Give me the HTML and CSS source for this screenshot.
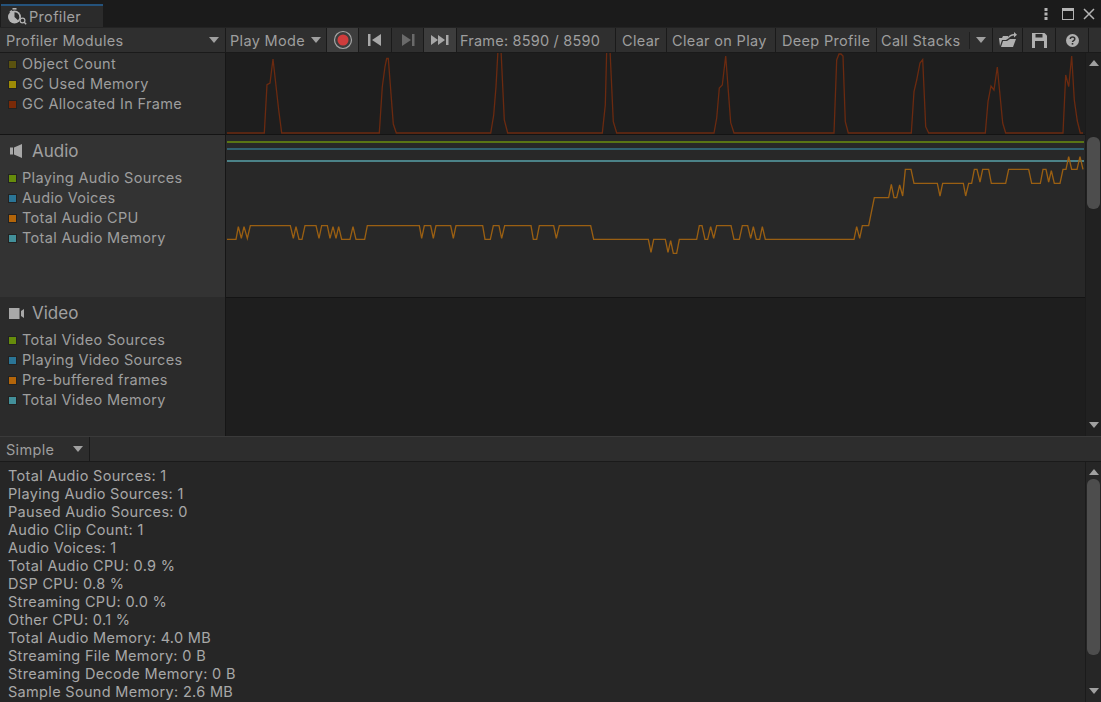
FILE: index.html
```html
<!DOCTYPE html>
<html lang="en">
<head>
    <meta charset="UTF-8">
    <title>Profiler</title>
    <link rel="stylesheet" href="styles.css">
</head>
<body>
    <div class="tabbar">
        <div class="tab">
            <svg class="tab-icon" width="19" height="17" viewBox="0 0 19 17">
                <rect x="4.500" y="0" width="4" height="1.600" fill="#b4b4b4"/>
                <path d="M1.500 3.500l2-1.500 1 1.200-2 1.500z" fill="#b4b4b4"/>
                <circle cx="6.500" cy="9" r="6.500" fill="#b4b4b4"/>
                <path d="M6.500 9V4.200A4.800 4.800 0 0 1 10 12.300z" fill="#2b2b2b"/>
                <circle cx="14.500" cy="12.500" r="2.400" fill="#2b2b2b" stroke="#b4b4b4" stroke-width="1.200"/>
                <path d="M16.200 14.300l2 2" stroke="#b4b4b4" stroke-width="1.400"/>
            </svg>
            <span>Profiler</span>
        </div>
        <div class="window-controls">
            <svg width="4" height="12" viewBox="0 0 4 12" fill="#b4b4b4"><rect x="0.500" y="0" width="3" height="3"/><rect x="0.500" y="4.500" width="3" height="3"/><rect x="0.500" y="9" width="3" height="3"/></svg>
            <svg class="win-max" width="12" height="12" viewBox="0 0 12 12"><rect x="0.500" y="0.500" width="11" height="11" fill="none" stroke="#b4b4b4"/><rect x="0" y="0" width="12" height="3" fill="#b4b4b4"/></svg>
            <svg width="12" height="12" viewBox="0 0 12 12"><path d="M1 1l10 10M11 1L1 11" stroke="#b4b4b4" stroke-width="1.500"/></svg>
        </div>
    </div>

    <div class="toolbar">
        <div class="btn modules-btn">Profiler Modules<i class="caret"></i></div>
        <div class="btn mode-btn">Play Mode<i class="caret"></i></div>
        <div class="btn icon-btn rec-btn active">
            <svg width="20" height="20" viewBox="0 0 20 20"><circle cx="10" cy="10" r="8.500" fill="none" stroke="#a5a5a5" stroke-width="1.200"/><circle cx="10" cy="10" r="5.500" fill="#d03c3c"/></svg>
        </div>
        <div class="btn icon-btn">
            <svg width="14" height="12" viewBox="0 0 14 12" fill="#a8a8a8"><rect x="0" y="0" width="2.500" height="12"/><path d="M13 0v12L4 6z"/></svg>
        </div>
        <div class="btn icon-btn next-btn">
            <svg width="14" height="12" viewBox="0 0 14 12" fill="#6a6a6a"><path d="M1 0v12l9-6z"/><rect x="11" y="0" width="2.500" height="12"/></svg>
        </div>
        <div class="btn icon-btn active">
            <svg width="18" height="10" viewBox="0 0 18 10" fill="#a8a8a8"><path d="M0 0v10l7-5z"/><path d="M7 0v10l7-5z"/><rect x="15" y="0" width="2.500" height="10"/></svg>
        </div>
        <div class="btn frame-label">Frame: 8590 / 8590</div>
        <div class="btn clear-btn">Clear</div>
        <div class="btn clear-play-btn">Clear on Play</div>
        <div class="btn deep-btn">Deep Profile</div>
        <div class="btn stacks-btn"><span class="stacks-label">Call Stacks</span><i class="caret"></i></div>
        <div class="btn icon-btn open-btn">
            <svg width="18" height="16" viewBox="0 0 18 16" fill="#b0b0b0"><path d="M0 6h3l1-2h5l1 2H10L7 8H3l-2 6z" /><path d="M2 15l2-6h4l3-2h6l-3 8z"/><path d="M9 6c1-3 3-4 6-4V0l3 2.800L15 5.500V3.500c-2 0-4 1-5 2.500z"/></svg>
        </div>
        <div class="btn icon-btn save-btn">
            <svg width="15" height="15" viewBox="0 0 15 15"><path d="M0 0h12.500L15 2.500V15H0z" fill="#b0b0b0"/><rect x="3.500" y="1" width="7" height="3.500" fill="#2f2f2f"/><rect x="3" y="8" width="9" height="7" fill="#2f2f2f"/></svg>
        </div>
        <div class="btn icon-btn help-btn">
            <svg width="13" height="13" viewBox="0 0 13 13"><circle cx="6.500" cy="6.500" r="6.500" fill="#b0b0b0"/><path d="M4.300 5c0-2.600 4.500-2.600 4.500 0 0 1.600-2.300 1.500-2.300 3" fill="none" stroke="#2f2f2f" stroke-width="1.500"/><rect x="5.700" y="9" width="1.600" height="1.600" fill="#2f2f2f"/></svg>
        </div>
        <div class="btn toolbar-fill"></div>
    </div>

    <div class="modules">
        <div class="module-rows">
            <section class="module module-memory">
                <div class="legend">
                    <div class="legend-row"><i class="swatch sw-olive"></i>Object Count</div>
                    <div class="legend-row"><i class="swatch sw-yellow"></i>GC Used Memory</div>
                    <div class="legend-row"><i class="swatch sw-red"></i>GC Allocated In Frame</div>
                </div>
                <div class="chart">
                    <svg viewBox="226 53 859 81">
                        <polyline class="line-gc" points="227,133 264.300,133 267,84.700 270,83 273,59 278.700,110 281.700,133 379.300,133 382.300,86.700 385,66.700 386.700,58.500 388.300,58.500 393.300,124 396.300,133 490.700,133 493.700,115 496,86.700 498,50 501,50 504.300,120 507.700,133 602.300,133 605.300,105 606.700,50 610,50 613.300,121.700 616.700,133 714,133 716.700,118 719.300,88 722.300,85 725.700,56 730.700,122.700 734,133 834,133 836.700,60 839,54 841,54 843,56 845.300,121.700 848.300,133 911.300,133 914,91.700 916.700,80 920,63 922.700,59.500 925.700,126.700 928.700,133 985.300,133 988,101.700 991,86 994,90 997.300,67 1002.700,123 1005.700,133 1063,133 1065.700,75 1068.700,86.700 1071.700,56 1074.300,100 1077.300,121 1080.300,133 1083,133"/>
                    </svg>
                </div>
            </section>

            <section class="module module-audio">
                <div class="legend">
                    <h3 class="module-title">
                        <svg class="icon-speaker" width="12" height="14" viewBox="0 0 12 14" fill="#a8a8a8"><rect x="0" y="3.500" width="3" height="7"/><path d="M4 3.500L12 0v14L4 10.500z"/></svg>
                        Audio
                    </h3>
                    <div class="legend-row"><i class="swatch sw-green"></i>Playing Audio Sources</div>
                    <div class="legend-row"><i class="swatch sw-blue"></i>Audio Voices</div>
                    <div class="legend-row"><i class="swatch sw-orange"></i>Total Audio CPU</div>
                    <div class="legend-row"><i class="swatch sw-teal"></i>Total Audio Memory</div>
                </div>
                <div class="chart">
                    <svg viewBox="226 135 859 162">
                        <line class="line-green" x1="227" y1="142" x2="1084" y2="142"/>
                        <line class="line-blue" x1="227" y1="149" x2="1084" y2="149"/>
                        <line class="line-teal" x1="227" y1="161" x2="1084" y2="161"/>
                        <!-- trace coordinates are in 3x units, three stretches of the line -->
                        <g transform="translate(220 130) scale(.33333)">
                            <polyline class="line-cpu" points="21,328 48,328 55,290 64,325 72,290 82,325 91,287 211,287 220,325 228,290 237,328 246,328 255,287 288,287 297,325 305,287 322,287 330,325 339,290 348,325 356,290 365,328 390,328 399,290 408,328 434,328 442,287 598,287 605,325 613,287 632,287 640,325 648,287 692,287 700,325 708,287 788,287 795,328 811,328 820,287 837,287 845,325 854,287 900,287"/>
                        </g>
                        <g transform="translate(520 130) scale(.33333)">
                            <polyline class="line-cpu" points="0,287 33,287 40,328 50,328 58,287 101,287 109,325 118,287 212,287 221,328 385,328 393,367 401,328 436,328 444,367 452,332 460,370 470,370 478,328 530,328 538,287 546,287 555,328 563,328 572,290 581,325 590,287 633,287 642,328 658,328 667,287 683,287 692,325 700,290 709,328 719,328 727,290 736,328 900,328"/>
                        </g>
                        <g transform="translate(820 130) scale(.33333)">
                            <polyline class="line-cpu" points="0,328 102,328 110,290 119,325 127,287 146,287 163,203 206,203 214,163 222,203 230,203 239,165 248,198 256,118 273,118 282,160 352,160 360,198 368,160 430,160 437,198 446,160 455,160 463,118 471,118 480,156 488,118 506,118 514,160 557,160 566,118 626,118 635,160 661,160 669,118 678,118 686,156 694,122 703,160 720,160 729,118 738,118 746,80 755,118 771,118 780,80 789,118"/>
                        </g>
                    </svg>
                </div>
            </section>

            <section class="module module-video">
                <div class="legend">
                    <h3 class="module-title">
                        <svg class="icon-video" width="15" height="11" viewBox="0 0 15 11" fill="#a8a8a8"><rect x="0" y="0" width="10.500" height="11"/><path d="M12 3L15 1v9l-3-2z"/></svg>
                        Video
                    </h3>
                    <div class="legend-row"><i class="swatch sw-green"></i>Total Video Sources</div>
                    <div class="legend-row"><i class="swatch sw-blue"></i>Playing Video Sources</div>
                    <div class="legend-row"><i class="swatch sw-orange"></i>Pre-buffered frames</div>
                    <div class="legend-row"><i class="swatch sw-teal"></i>Total Video Memory</div>
                </div>
                <div class="chart"></div>
            </section>
        </div>
        <div class="scrollbar">
            <i class="arrow-up"></i>
            <div class="thumb thumb-modules"></div>
            <i class="arrow-down"></i>
        </div>
    </div>

    <div class="details-bar">
        <div class="simple-btn">Simple<i class="caret"></i></div>
    </div>

    <div class="details">
        <div class="details-text">
            <div>Total Audio Sources: 1</div>
            <div>Playing Audio Sources: 1</div>
            <div>Paused Audio Sources: 0</div>
            <div>Audio Clip Count: 1</div>
            <div>Audio Voices: 1</div>
            <div>Total Audio CPU: 0.9 %</div>
            <div>DSP CPU: 0.8 %</div>
            <div>Streaming CPU: 0.0 %</div>
            <div>Other CPU: 0.1 %</div>
            <div>Total Audio Memory: 4.0 MB</div>
            <div>Streaming File Memory: 0 B</div>
            <div>Streaming Decode Memory: 0 B</div>
            <div>Sample Sound Memory: 2.6 MB</div>
        </div>
        <div class="scrollbar details-scroll">
            <i class="arrow-up"></i>
            <div class="thumb thumb-details"></div>
            <i class="arrow-down"></i>
        </div>
    </div>
</body>
</html>
```

FILE: styles.css
```css
html, body {
    height: 100%;
}
body {
    margin: 0;
    display: flex;
    flex-direction: column;
    height: 702px;
    overflow: hidden;
    background: #262626;
    color: #9e9e9e;
    font-family: Inter, "Liberation Sans", sans-serif;
    font-size: 14.5px;
    letter-spacing: .32px;
}

/* tab strip */
.tabbar {
    height: 27px;
    flex: none;
    display: flex;
    justify-content: space-between;
    box-sizing: border-box;
    background: #1b1b1b;
    padding: 4px 6px 0 1px;
}
.tab {
    width: 102px;
    box-sizing: border-box;
    display: flex;
    align-items: center;
    gap: 2px;
    padding: 0 0 0 7px;
    background: #2b2b2b;
    border-top: 2px solid #25537c;
    color: #a0a0a0;
}
.window-controls {
    display: flex;
    align-items: center;
    gap: 9px;
    padding-bottom: 4px;
}
.win-max {
    margin-left: 5px;
}

/* toolbar */
.toolbar {
    height: 26px;
    flex: none;
    box-sizing: border-box;
    display: flex;
    gap: 1px;
    background: #1a1a1a;
    border-top: 1px solid #232323;
    border-bottom: 1px solid #1a1a1a;
}
.btn {
    display: flex;
    align-items: center;
    box-sizing: border-box;
    padding: 0 6px;
    background: #2f2f2f;
    white-space: nowrap;
}
.btn.active {
    background: #3d3d3d;
}
.caret {
    display: block;
    width: 0;
    height: 0;
    border-left: 5px solid transparent;
    border-right: 5px solid transparent;
    border-top: 6px solid #a0a0a0;
}
.modules-btn {
    width: 225px;
    justify-content: space-between;
}
.mode-btn {
    width: 100px;
    padding: 0 5px 0 4px;
    justify-content: space-between;
}
.icon-btn {
    width: 32px;
    padding: 0;
    justify-content: center;
}
.rec-btn, .next-btn {
    width: 31px;
}
.open-btn {
    width: 29px;
}
.frame-label {
    width: 158px;
    padding: 0 3px;
    letter-spacing: .2px;
}
.clear-btn {
    width: 50px;
}
.clear-play-btn {
    width: 108px;
    padding: 0 5px;
}
.deep-btn {
    width: 100px;
}
.stacks-btn {
    width: 115px;
    padding: 0 6px 0 4px;
}
.stacks-label {
    padding-right: 8px;
    margin-right: 6px;
    border-right: 1px solid #1f1f1f;
}
.toolbar-fill {
    flex: 1;
    padding: 0;
}

/* module rows */
.modules {
    height: 383px;
    flex: none;
    display: flex;
}
.module-rows {
    flex: 1;
    display: flex;
    flex-direction: column;
}
.module {
    display: flex;
    box-sizing: border-box;
}
.module-memory {
    height: 82px;
    border-bottom: 1px solid #141414;
}
.module-audio {
    height: 162px;
}
.module-video {
    flex: 1;
}
.legend {
    width: 226px;
    flex: none;
    box-sizing: border-box;
    padding-left: 8px;
    background: #2b2b2b;
    border-right: 1px solid #161616;
}
.module-audio .legend {
    background: #333333;
}
.legend-row {
    height: 20px;
    display: flex;
    align-items: center;
    gap: 5px;
}
.swatch {
    width: 9px;
    height: 9px;
    margin-top: 2px;
    box-sizing: border-box;
    border: 1px solid #222222;
}
.sw-olive { background: #5a5210; }
.sw-yellow { background: #9c8a06; }
.sw-red { background: #7a2a08; }
.sw-green { background: #668c0c; }
.sw-blue { background: #2b7596; }
.sw-orange { background: #b3650a; }
.sw-teal { background: #43909a; }

.module-title {
    margin: 0;
    height: 32px;
    display: flex;
    align-items: center;
    font-size: 17px;
    font-weight: normal;
    letter-spacing: 0;
    color: #a0a0a0;
}
.icon-speaker {
    margin: 0 10px 0 2px;
}
.icon-video {
    margin: 0 8px 0 1px;
}
.chart {
    flex: 1;
    min-width: 0;
    background: #1e1e1e;
}
.module-audio .chart {
    background: #282828;
}
.module-video .chart {
    border-top: 1px solid #141414;
}
.chart svg {
    display: block;
    width: 100%;
    height: 100%;
    overflow: hidden;
}
polyline, line {
    fill: none;
}
.line-gc {
    stroke: #6b2a10;
    stroke-width: 1.300;
}
.line-green {
    stroke: #5a7514;
    stroke-width: 2;
}
.line-blue {
    stroke: #30606f;
    stroke-width: 2;
}
.line-teal {
    stroke: #4b8288;
    stroke-width: 2;
}
.line-cpu {
    stroke: #9a5f12;
    stroke-width: 4;
}

/* scrollbars */
.scrollbar {
    width: 16px;
    flex: none;
    box-sizing: border-box;
    display: flex;
    flex-direction: column;
    align-items: center;
    background: #212121;
    border-left: 1px solid #1b1b1b;
}
.arrow-up, .arrow-down {
    display: block;
    width: 0;
    height: 0;
    border-left: 5px solid transparent;
    border-right: 5px solid transparent;
}
.arrow-up {
    border-bottom: 6px solid #a0a0a0;
    margin-top: 7px;
}
.arrow-down {
    border-top: 6px solid #a0a0a0;
    margin-top: auto;
    margin-bottom: 8px;
}
.thumb {
    width: 13px;
    border-radius: 6px;
    background: #4d4d4d;
}
.thumb-modules {
    height: 72px;
    margin-top: 71px;
}
.thumb-details {
    height: 176px;
    margin-top: 4px;
}

/* bottom pane */
.details-bar {
    height: 26px;
    flex: none;
    box-sizing: border-box;
    display: flex;
    background: #2d2d2d;
    border-top: 1px solid #3a3a3a;
    border-bottom: 1px solid #1a1a1a;
}
.simple-btn {
    width: 90px;
    box-sizing: border-box;
    display: flex;
    align-items: center;
    justify-content: space-between;
    padding: 0 6px;
    border-right: 1px solid #1a1a1a;
}
.details {
    flex: 1;
    min-height: 0;
    display: flex;
}
.details-text {
    flex: 1;
    padding: 5px 0 0 8px;
    line-height: 18px;
    color: #a8a8a8;
    overflow: hidden;
}
.details-scroll {
    background: #262626;
}
```
